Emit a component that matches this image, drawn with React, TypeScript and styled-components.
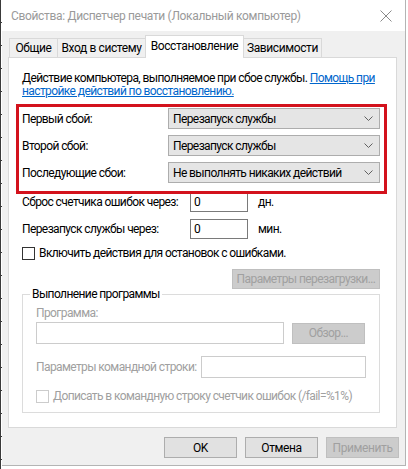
import React from 'react';
import styled, { createGlobalStyle } from 'styled-components';

const GlobalStyle = createGlobalStyle`
  * { box-sizing: border-box; }
  html, body { margin: 0; padding: 0; background: #ffffff; }
  body {
    font-family: Roboto, 'Noto Sans', sans-serif;
    font-size: 12px;
    letter-spacing: -0.6px;
    color: #000000;
  }
`;

const Desktop = styled.div`
  display: flex;
  width: 408px;
  height: 469px;
  background: #ffffff;
`;

const LeftStrip = styled.div`
  width: 2px;
  height: 469px;
  border-left: 1px solid #3a3a3a;
  background: repeating-linear-gradient(to bottom, transparent 0 22px, #3a3a3a 22px 23px);
`;

const Window = styled.div`
  width: 404px;
  height: 466px;
  display: flex;
  flex-direction: column;
  background: #f0f0f0;
  border-right: 1px solid #b4b4b4;
  border-bottom: 1px solid #b4b4b4;
`;

const TitleBar = styled.div`
  height: 31px;
  flex-shrink: 0;
  display: flex;
  align-items: center;
  justify-content: space-between;
  padding: 0 13px 0 9px;
  background: #ffffff;
  color: #9a9a9a;
  letter-spacing: -0.33px;
`;

const TabRow = styled.div`
  display: flex;
  align-items: flex-end;
  height: 19px;
  margin-top: 7px;
  padding-left: 8px;
  letter-spacing: -0.4px;
`;

const Tab = styled.div<{ $w: number; $active?: boolean }>`
  position: relative;
  z-index: ${p => (p.$active ? 2 : 0)};
  width: ${p => p.$w}px;
  height: ${p => (p.$active ? 23 : 19)}px;
  margin-left: -1px;
  margin-bottom: ${p => (p.$active ? -1 : 0)}px;
  display: flex;
  align-items: ${p => (p.$active ? 'flex-start' : 'center')};
  padding-top: ${p => (p.$active ? 3 : 0)}px;
  justify-content: center;
  border: 1px solid #d9d9d9;
  border-bottom: none;
  background: ${p => (p.$active ? '#ffffff' : '#f0f0f0')};
  white-space: nowrap;
`;

const Panel = styled.div`
  position: relative;
  z-index: 1;
  height: 371px;
  margin: 0 8px 0 6px;
  padding: 14px 16px 0 13px;
  background: #ffffff;
  border: 1px solid #d9d9d9;
  display: flex;
  flex-direction: column;
`;

const Description = styled.div`
  line-height: 13px;
  white-space: nowrap;
`;

const HelpLink = styled.a`
  color: #0066cc;
  text-decoration: underline;
`;

const FailureGrid = styled.div`
  position: relative;
  display: grid;
  grid-template-columns: 146px 212px;
  grid-auto-rows: 21px;
  row-gap: 6px;
  margin-top: 10px;
  align-items: center;
  white-space: nowrap;
`;

const Highlight = styled.div`
  position: absolute;
  left: -6px;
  top: -4px;
  width: 371px;
  height: 90px;
  border: 3px solid #d3121c;
  pointer-events: none;
  z-index: 3;
`;

const Combo = styled.div`
  height: 21px;
  display: flex;
  align-items: center;
  justify-content: space-between;
  padding: 0 6px 0 4px;
  background: #e5e5e5;
  border: 1px solid #adadad;
`;

const DelayGrid = styled.div`
  display: grid;
  grid-template-columns: 168px 58px auto;
  grid-auto-rows: 20px;
  row-gap: 7px;
  margin-top: 9px;
  align-items: center;
  white-space: nowrap;
`;

const Unit = styled.span`
  padding-left: 10px;
`;

const TextBox = styled.div<{ $w?: number; $h?: number; $disabled?: boolean }>`
  width: ${p => (p.$w ? `${p.$w}px` : 'auto')};
  height: ${p => p.$h ?? 20}px;
  display: flex;
  align-items: center;
  padding-left: 3px;
  background: #ffffff;
  border: 1px solid ${p => (p.$disabled ? '#cccccc' : '#7a7a7a')};
`;

const CheckRow = styled.label<{ $disabled?: boolean; $top: number }>`
  display: flex;
  align-items: center;
  gap: 4px;
  margin-top: ${p => p.$top}px;
  color: ${p => (p.$disabled ? '#a0a0a0' : '#000000')};
  white-space: nowrap;
`;

const CheckBox = styled.span<{ $disabled?: boolean }>`
  width: 13px;
  height: 13px;
  flex-shrink: 0;
  background: #ffffff;
  border: 1px solid ${p => (p.$disabled ? '#cccccc' : '#333333')};
`;

const Button = styled.div<{ $w: number; $h?: number; $disabled?: boolean }>`
  width: ${p => p.$w}px;
  height: ${p => p.$h ?? 21}px;
  display: flex;
  align-items: center;
  justify-content: center;
  background: ${p => (p.$disabled ? '#cccccc' : '#e1e1e1')};
  border: 1px solid ${p => (p.$disabled ? '#bfbfbf' : '#adadad')};
  color: ${p => (p.$disabled ? '#a0a0a0' : '#000000')};
  white-space: nowrap;
`;

const RightAligned = styled.div`
  display: flex;
  justify-content: flex-end;
  margin-top: 9px;
`;

const GroupBox = styled.div`
  position: relative;
  height: 119px;
  margin-top: 5px;
  padding: 11px 14px 0 13px;
  border: 1px solid #dcdcdc;
  display: flex;
  flex-direction: column;
`;

const Legend = styled.span`
  position: absolute;
  left: 7px;
  top: -9px;
  padding: 0 2px;
  background: #ffffff;
  line-height: 16px;
`;

const Muted = styled.div`
  color: #a0a0a0;
  line-height: 14px;
`;

const ProgramRow = styled.div`
  display: flex;
  align-items: center;
  gap: 8px;
  margin-top: 2px;
`;

const ArgsRow = styled.div`
  display: grid;
  grid-template-columns: 165px 165px;
  align-items: center;
  margin-top: 12px;
  color: #a0a0a0;
  white-space: nowrap;
`;

const Footer = styled.div`
  display: flex;
  justify-content: flex-end;
  gap: 8px;
  margin-top: 9px;
  padding-right: 6px;
  letter-spacing: -0.4px;
`;

const Chevron = () => (
  <svg width="9" height="5" viewBox="0 0 9 5">
    <path d="M0.5 0.5 L4.5 4.5 L8.5 0.5" fill="none" stroke="#606060" strokeWidth="1" />
  </svg>
);

const CloseIcon = () => (
  <svg width="12" height="12" viewBox="0 0 12 12">
    <path d="M0.5 0.5 L11.5 11.5 M11.5 0.5 L0.5 11.5" stroke="#8a8a8a" strokeWidth="1" />
  </svg>
);

const failures = [
  ['Первый сбой:', 'Перезапуск службы'],
  ['Второй сбой:', 'Перезапуск службы'],
  ['Последующие сбои:', 'Не выполнять никаких действий'],
];

export default function App() {
  return (
    <Desktop>
      <GlobalStyle />
      <LeftStrip />
      <Window>
        <TitleBar>
          <span>Свойства: Диспетчер печати (Локальный компьютер)</span>
          <CloseIcon />
        </TitleBar>
        <TabRow>
          <Tab $w={49}>Общие</Tab>
          <Tab $w={89}>Вход в систему</Tab>
          <Tab $w={99} $active>Восстановление</Tab>
          <Tab $w={79}>Зависимости</Tab>
        </TabRow>
        <Panel>
          <Description>
            Действие компьютера, выполняемое при сбое службы. <HelpLink>Помощь при</HelpLink>
            <br />
            <HelpLink>настройке действий по восстановлению.</HelpLink>
          </Description>

          <FailureGrid>
            {failures.map(([label, value]) => (
              <React.Fragment key={label}>
                <span>{label}</span>
                <Combo>
                  <span>{value}</span>
                  <Chevron />
                </Combo>
              </React.Fragment>
            ))}
            <Highlight />
          </FailureGrid>

          <DelayGrid>
            <span>Сброс счетчика ошибок через:</span>
            <TextBox>0</TextBox>
            <Unit>дн.</Unit>
            <span>Перезапуск службы через:</span>
            <TextBox>0</TextBox>
            <Unit>мин.</Unit>
          </DelayGrid>

          <CheckRow $top={7}>
            <CheckBox />
            Включить действия для остановок с ошибками.
          </CheckRow>

          <RightAligned>
            <Button $w={148} $h={20} $disabled>Параметры перезагрузки...</Button>
          </RightAligned>

          <GroupBox>
            <Legend>Выполнение программы</Legend>
            <Muted>Программа:</Muted>
            <ProgramRow>
              <TextBox $w={248} $h={22} $disabled />
              <Button $w={73} $disabled>Обзор...</Button>
            </ProgramRow>
            <ArgsRow>
              <span>Параметры командной строки:</span>
              <TextBox $w={165} $h={22} $disabled />
            </ArgsRow>
            <CheckRow $disabled $top={11}>
              <CheckBox $disabled />
              Дописать в командную строку счетчик ошибок (/fail=%1%)
            </CheckRow>
          </GroupBox>
        </Panel>
        <Footer>
          <Button $w={73}>OK</Button>
          <Button $w={73}>Отмена</Button>
          <Button $w={73} $disabled>Применить</Button>
        </Footer>
      </Window>
    </Desktop>
  );
}
